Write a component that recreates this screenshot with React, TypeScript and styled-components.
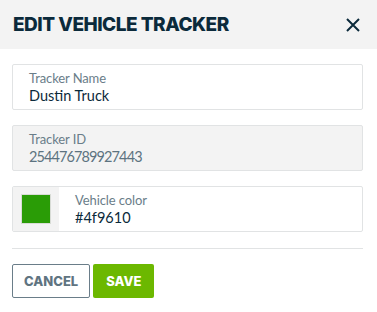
import React from "react";
import styled, { createGlobalStyle } from "styled-components";

const GlobalStyle = createGlobalStyle`
  html, body {
    margin: 0;
    padding: 0;
    background: #ffffff;
  }
  * {
    box-sizing: border-box;
  }
`;

const App: React.FC = () => {
  return (
    <>
      <GlobalStyle />
      <Dialog>
        <Header>
          <Title>EDIT VEHICLE TRACKER</Title>
          <CloseButton aria-label="Close">
            <svg width="14" height="14" viewBox="0 0 14 14">
              <path d="M1 1L13 13M13 1L1 13" stroke="#0b2a3b" strokeWidth="2" />
            </svg>
          </CloseButton>
        </Header>
        <Body>
          <Field>
            <FieldText>
              <Label>Tracker Name</Label>
              <Value>Dustin Truck</Value>
            </FieldText>
          </Field>
          <Field disabled>
            <FieldText>
              <Label>Tracker ID</Label>
              <Value disabled>254476789927443</Value>
            </FieldText>
          </Field>
          <Field>
            <SwatchWell>
              <Swatch color="#2a9c06" />
            </SwatchWell>
            <FieldText>
              <Label>Vehicle color</Label>
              <Value>#4f9610</Value>
            </FieldText>
          </Field>
          <Divider />
          <Actions>
            <Button variant="outline">CANCEL</Button>
            <Button variant="primary">SAVE</Button>
          </Actions>
        </Body>
      </Dialog>
    </>
  );
};

export default App;

const Dialog = styled.div`
  width: 377px;
  height: 312px;
  background: #ffffff;
`;

const Header = styled.div`
  height: 49px;
  background: #f3f3f3;
  display: flex;
  align-items: center;
  justify-content: space-between;
  padding: 0 17px 0 13px;
`;

const Title = styled.h1`
  margin: 0;
  font-family: "Inter", "Liberation Sans", sans-serif;
  font-weight: 800;
  font-size: 19px;
  letter-spacing: -0.5px;
  color: #0b2a3b;
`;

const CloseButton = styled.button`
  border: none;
  background: transparent;
  padding: 0;
  display: flex;
  cursor: pointer;
`;

const Body = styled.div`
  padding: 15px 14px 0 12px;
  display: flex;
  flex-direction: column;
`;

const Field = styled.div<{ disabled?: boolean }>`
  height: 46px;
  display: flex;
  align-items: stretch;
  border: 1px solid #e1e3e4;
  border-radius: 2px;
  background: ${(p) => (p.disabled ? "#f3f3f3" : "#ffffff")};
  margin-bottom: 15px;
  overflow: hidden;
`;

const FieldText = styled.div`
  display: flex;
  flex-direction: column;
  justify-content: center;
  padding-left: 16px;
  font-family: "Lato", "Liberation Sans", sans-serif;
`;

const Label = styled.span`
  font-size: 13px;
  line-height: 16px;
  color: #6a7d89;
  letter-spacing: -0.1px;
`;

const Value = styled.span<{ disabled?: boolean }>`
  font-size: 14.5px;
  line-height: 19px;
  color: ${(p) => (p.disabled ? "#5d7380" : "#0b2a3b")};
  letter-spacing: ${(p) => (p.disabled ? "-0.9px" : "0")};
`;

const SwatchWell = styled.div`
  width: 46px;
  background: #f3f3f3;
  display: flex;
  align-items: center;
  justify-content: center;
`;

const Swatch = styled.div<{ color: string }>`
  width: 30px;
  height: 30px;
  background: ${(p) => p.color};
  border: 1px solid #d8dcd6;
`;

const Divider = styled.hr`
  margin: 1px 0 0;
  border: none;
  border-top: 1px solid #e1e3e4;
`;

const Actions = styled.div`
  display: flex;
  gap: 3px;
  margin-top: 15px;
`;

const Button = styled.button<{ variant: "outline" | "primary" }>`
  height: 34px;
  padding: ${(p) => (p.variant === "outline" ? "0 11px" : "0 13px")};
  border-radius: 2px;
  font-family: "Inter", "Liberation Sans", sans-serif;
  font-weight: 800;
  font-size: 13px;
  cursor: pointer;
  border: ${(p) => (p.variant === "outline" ? "1.5px solid #6a7d89" : "none")};
  background: ${(p) => (p.variant === "outline" ? "#ffffff" : "#6cb800")};
  color: ${(p) => (p.variant === "outline" ? "#5f7481" : "#ffffff")};
`;
